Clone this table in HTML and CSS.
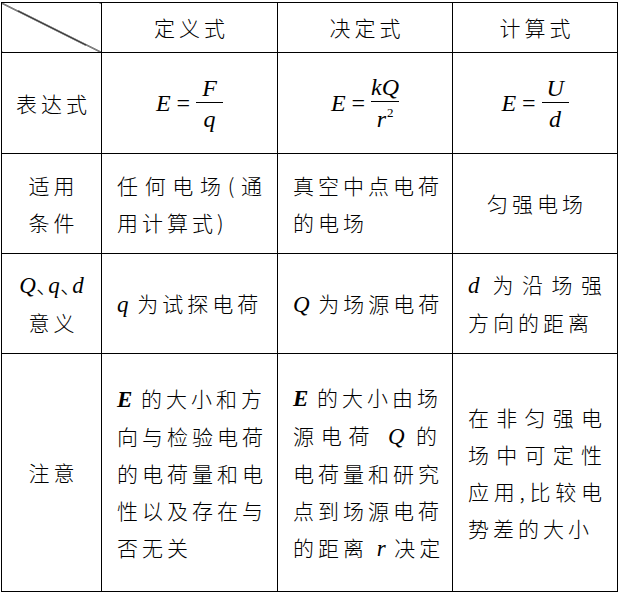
FILE: index.html
```html
<!DOCTYPE html>
<html lang="zh">
<head>
<meta charset="utf-8">
<link rel="stylesheet" href="styles.css">
</head>
<body>
<table class="grid">
  <colgroup>
    <col class="c1"><col class="c2"><col class="c3"><col class="c4">
  </colgroup>
  <tr class="r-head">
    <td class="diag"></td>
    <td class="center">定义式</td>
    <td class="center">决定式</td>
    <td class="center">计算式</td>
  </tr>
  <tr class="r-formula">
    <td class="center">表达式</td>
    <td>
      <div class="formula">
        <i class="v">E</i><span class="eq">=</span>
        <span class="frac"><span class="num"><i class="v">F</i></span><span class="den"><i class="v">q</i></span></span>
      </div>
    </td>
    <td>
      <div class="formula">
        <i class="v">E</i><span class="eq">=</span>
        <span class="frac"><span class="num"><i class="v">kQ</i></span><span class="den"><i class="v">r</i><span class="sup">2</span></span></span>
      </div>
    </td>
    <td>
      <div class="formula">
        <i class="v">E</i><span class="eq">=</span>
        <span class="frac"><span class="num"><i class="v">U</i></span><span class="den"><i class="v">d</i></span></span>
      </div>
    </td>
  </tr>
  <tr class="r-cond">
    <td class="center"><div class="line">适用</div><div class="line">条件</div></td>
    <td class="text"><div class="line j">任何电场(通</div><div class="line">用计算式)</div></td>
    <td class="text"><div class="line j">真空中点电荷</div><div class="line">的电场</div></td>
    <td class="center">匀强电场</td>
  </tr>
  <tr class="r-mean">
    <td class="center"><div class="line tight"><i class="m">Q</i><span class="dun">､</span><i class="m">q</i><span class="dun">､</span><i class="m">d</i></div><div class="line">意义</div></td>
    <td class="text"><div class="line"><i class="m">q</i> 为试探电荷</div></td>
    <td class="text"><div class="line j"><i class="m">Q</i> 为场源电荷</div></td>
    <td class="text"><div class="line j"><i class="m">d</i> 为沿场强</div><div class="line">方向的距离</div></td>
  </tr>
  <tr class="r-note">
    <td class="center">注意</td>
    <td class="text">
      <div class="line j"><b class="m">E</b> 的大小和方</div>
      <div class="line j">向与检验电荷</div>
      <div class="line j">的电荷量和电</div>
      <div class="line j">性以及存在与</div>
      <div class="line">否无关</div>
    </td>
    <td class="text">
      <div class="line j"><b class="m">E</b> 的大小由场</div>
      <div class="line j">源电荷 <i class="m">Q</i> 的</div>
      <div class="line j">电荷量和研究</div>
      <div class="line j">点到场源电荷</div>
      <div class="line j">的距离 <i class="m">r</i> 决定</div>
    </td>
    <td class="text">
      <div class="line j">在非匀强电</div>
      <div class="line j">场中可定性</div>
      <div class="line j">应用,比较电</div>
      <div class="line">势差的大小</div>
    </td>
  </tr>
</table>
</body>
</html>
```
FILE: styles.css
```css
html, body {
  margin: 0;
  padding: 0;
  background: #fff;
}
body {
  font-family: "Noto Sans CJK SC", sans-serif;
  font-weight: 300;
  font-size: 21px;
  color: #000;
}
.grid {
  border-collapse: collapse;
  table-layout: fixed;
  margin: 2px 0 0 1px;
  width: 616px;
}
.c1 { width: 100px; }
.c2 { width: 176px; }
.c3 { width: 175px; }
.c4 { width: 165px; }
.grid td {
  border: 1px solid #000;
  padding: 0 15px;
  vertical-align: middle;
  letter-spacing: 4px;
  line-height: 37px;
}
.r-head td { height: 49px; }
.r-formula td { height: 100px; }
.r-cond td { height: 99px; }
.r-mean td { height: 99px; }
.r-note td { height: 237px; }
.grid td.center {
  text-align: center;
  padding-left: 4px;
  padding-right: 0;
}
.grid td.diag {
  background: linear-gradient(to top right, transparent calc(50% - 0.6px), #000 calc(50% - 0.6px), #000 calc(50% + 0.6px), transparent calc(50% + 0.6px));
}
.line {
  white-space: nowrap;
}
.line.j {
  text-align: justify;
  text-align-last: justify;
  text-justify: inter-character;
  margin-right: -4px;
}
.line.tight {
  letter-spacing: 0;
  margin-left: -4px;
}
.dun {
  letter-spacing: 0;
  margin: 0 1px;
}
.m {
  font-family: "Liberation Serif", serif;
  font-style: italic;
  font-size: 23px;
  letter-spacing: 0;
}
b.m { font-weight: bold; }
.formula {
  display: flex;
  align-items: center;
  justify-content: center;
  letter-spacing: 0;
  font-family: "Liberation Serif", serif;
  font-size: 24px;
  line-height: 1;
}
.v {
  font-style: italic;
  font-family: "Liberation Serif", serif;
}
.eq {
  margin: 0 6px 0 6px;
}
.frac {
  display: flex;
  flex-direction: column;
  align-items: center;
}
.num {
  display: block;
  min-width: 27px;
  text-align: center;
  padding: 0 0 2px;
  border-bottom: 1px solid #000;
}
.den {
  display: block;
  text-align: center;
  padding-top: 4px;
}
.sup {
  font-size: 13px;
  vertical-align: 10px;
  margin-left: 1px;
}
```
